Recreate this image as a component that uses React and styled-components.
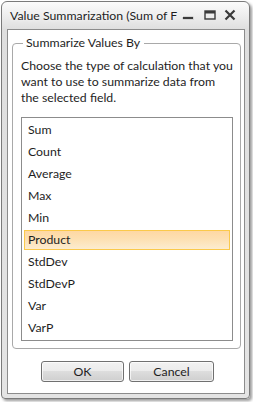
import React, { useState } from "react";
import styled, { createGlobalStyle } from "styled-components";

const FONT = `"Lato", "Noto Sans", sans-serif`;

const Global = createGlobalStyle`
  html, body { margin: 0; padding: 0; background: #ffffff; }
  body { font-family: ${FONT}; }
`;

const Page = styled.div`
  padding: 1px 0 0 1px;
  width: 253px;
  height: 402px;
  box-sizing: border-box;
`;

const Window = styled.div`
  width: 249px;
  height: 398px;
  box-sizing: border-box;
  border: 1px solid #7a7a7a;
  border-radius: 6px 6px 4px 4px;
  background: linear-gradient(to bottom, #fbfbfb 0px, #ededed 14px, #dedede 28px, #e4e4e4 100%);
  box-shadow: 2px 2px 3px rgba(0, 0, 0, 0.4);
  display: flex;
  flex-direction: column;
  padding: 0 4px 4px 5px;
`;

const TitleBar = styled.div`
  height: 27px;
  display: flex;
  align-items: center;
  padding-left: 3px;
  padding-bottom: 1px;
  box-sizing: border-box;
`;

const Title = styled.div`
  flex: 1;
  font-size: 12.3px;
  color: #1e1e1e;
  white-space: nowrap;
  text-shadow: 0 0 4px rgba(255, 255, 255, 0.9);
`;

const Controls = styled.div`
  display: flex;
  align-items: center;
  margin-right: 6px;
`;

const CtlButton = styled.div`
  width: ${(p) => p.$w}px;
  height: 16px;
  display: flex;
  align-items: center;
  justify-content: center;
`;

const Content = styled.div`
  flex: 1;
  background: #ffffff;
  border: 1px solid #8c8c8c;
  display: flex;
  flex-direction: column;
  padding: 5px 3px 10px 4px;
  min-height: 0;
`;

const Group = styled.fieldset`
  margin: 0;
  border: 1px solid #a9a9a9;
  border-radius: 4px;
  padding: 7px 7px 6px 8px;
  height: 314px;
  box-sizing: border-box;
  display: flex;
  flex-direction: column;
`;

const Legend = styled.legend`
  font-size: 12.3px;
  color: #1e1e1e;
  padding: 0 4px 0 3px;
  margin-left: 2px;
  line-height: 16px;
`;

const Description = styled.p`
  margin: 0 -4px 11px 0;
  font-size: 12.3px;
  line-height: 16px;
  color: #1e1e1e;
  white-space: nowrap;
`;

const ListBox = styled.div`
  border: 1px solid #8c8c8c;
  flex: 1;
  padding: 1px 2px;
  display: flex;
  flex-direction: column;
`;

const Item = styled.div`
  height: 20px;
  margin: 1px 0;
  box-sizing: border-box;
  padding-left: 3px;
  font-size: 12.3px;
  line-height: 18px;
  color: #1e1e1e;
  border: 1px solid ${(p) => (p.$selected ? "#fbc94a" : "transparent")};
  background: ${(p) =>
    p.$selected
      ? "linear-gradient(to bottom, #fed8a4 0%, #fde0b2 45%, #fcecd0 100%)"
      : "transparent"};
`;

const ButtonRow = styled.div`
  display: flex;
  justify-content: center;
  gap: 5px;
  margin-top: 12px;
  padding-left: 2px;
`;

const Button = styled.button`
  width: ${(p) => p.$w}px;
  height: 21px;
  border: 1px solid #707070;
  border-radius: 3px;
  background: linear-gradient(to bottom, #f2f2f2 0%, #ebebeb 50%, #dddddd 50%, #cfcfcf 100%);
  box-shadow: inset 0 0 0 1px rgba(255, 255, 255, 0.7);
  font-family: ${FONT};
  font-size: 12.3px;
  color: #1e1e1e;
  padding: 0;
`;

const items = ["Sum", "Count", "Average", "Max", "Min", "Product", "StdDev", "StdDevP", "Var", "VarP"];

export default function App() {
  const [sel, setSel] = useState("Product");
  return (
    <Page>
      <Global />
      <Window>
        <TitleBar>
          <Title>Value Summarization (Sum of F</Title>
          <Controls>
            <CtlButton $w={22}>
              <svg width="12" height="16" viewBox="0 0 12 16">
                <rect x="0.5" y="9.5" width="11" height="3" fill="#3a3a3a" stroke="#fff" strokeWidth="0.6" />
              </svg>
            </CtlButton>
            <CtlButton $w={22}>
              <svg width="12" height="16" viewBox="0 0 12 16">
                <rect x="1" y="4" width="10" height="8" fill="none" stroke="#3a3a3a" strokeWidth="1.4" />
                <rect x="1" y="4" width="10" height="2.5" fill="#3a3a3a" />
              </svg>
            </CtlButton>
            <CtlButton $w={18}>
              <svg width="12" height="16" viewBox="0 0 12 16">
                <path d="M1.5 3.5 L10.5 12.5 M10.5 3.5 L1.5 12.5" stroke="#3a3a3a" strokeWidth="2.2" strokeLinecap="butt" />
              </svg>
            </CtlButton>
          </Controls>
        </TitleBar>
        <Content>
          <Group>
            <Legend>Summarize Values By</Legend>
            <Description>
              Choose the type of calculation that you
              <br />
              want to use to summarize data from
              <br />
              the selected field.
            </Description>
            <ListBox>
              {items.map((it) => (
                <Item key={it} $selected={it === sel} onClick={() => setSel(it)}>
                  {it}
                </Item>
              ))}
            </ListBox>
          </Group>
          <ButtonRow>
            <Button $w={83}>OK</Button>
            <Button $w={85}>Cancel</Button>
          </ButtonRow>
        </Content>
      </Window>
    </Page>
  );
}
